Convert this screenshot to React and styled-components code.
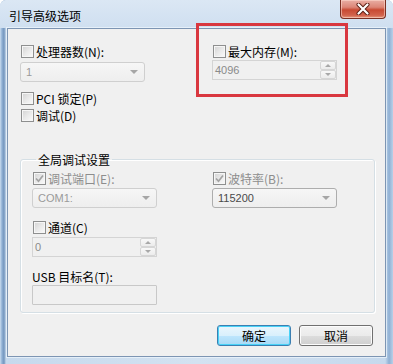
import React from "react";
import styled, { createGlobalStyle } from "styled-components";

const GlobalStyle = createGlobalStyle`
    html, body {
        margin: 0;
        padding: 0;
        background: #ffffff;
    }
    body {
        font-family: "Noto Sans CJK SC", "Noto Sans", sans-serif;
    }
`;

const Check = ({ checked }) => (
    <Box>
        {checked && (
            <svg width="11" height="11" viewBox="0 0 11 11">
                <path
                    d="M2 5.5 L4.5 8.2 L9 2.5"
                    fill="none"
                    stroke="#a3a3a3"
                    strokeWidth="1.7"
                />
            </svg>
        )}
    </Box>
);

const CheckField = ({ label, checked, dim, indent }) => (
    <CheckRow $dim={dim} $indent={indent}>
        <Check checked={checked} />
        <span>{label}</span>
    </CheckRow>
);

const Combo = ({ value, dim, top }) => (
    <ComboBox $dim={dim} $top={top}>
        <span>{value}</span>
        <Arrow />
    </ComboBox>
);

const Spin = ({ value, top }) => (
    <SpinBox $top={top}>
        <span>{value}</span>
        <SpinButtons>
            <SpinBtn>
                <Tri $up />
            </SpinBtn>
            <SpinBtn>
                <Tri />
            </SpinBtn>
        </SpinButtons>
    </SpinBox>
);

const App = () => {
    return (
        <>
            <GlobalStyle />
            <Window>
                <TitleBar>
                    <Title>引导高级选项</Title>
                    <CloseButton>
                        <svg width="14" height="12" viewBox="0 0 14 12">
                            <path
                                d="M2.5 1.5 L11.5 10.5 M11.5 1.5 L2.5 10.5"
                                stroke="#5a1d12"
                                strokeWidth="4"
                                strokeLinecap="round"
                            />
                            <path
                                d="M2.5 1.5 L11.5 10.5 M11.5 1.5 L2.5 10.5"
                                stroke="#ffffff"
                                strokeWidth="2.2"
                                strokeLinecap="round"
                            />
                        </svg>
                    </CloseButton>
                </TitleBar>
                <Client>
                    <Columns $first={192}>
                        <Column>
                            <CheckField label="处理器数(N):" indent={1} />
                            <Combo value="1" dim top={4} />
                            <Gap $h={10} />
                            <CheckField label="PCI 锁定(P)" indent={1} />
                            <Gap $h={4} />
                            <CheckField label="调试(D)" indent={1} />
                        </Column>
                        <Column>
                            <CheckField label="最大内存(M):" indent={1} />
                            <Spin value="4096" top={2} />
                        </Column>
                    </Columns>
                    <Group>
                        <Legend>全局调试设置</Legend>
                        <Columns $first={180}>
                            <Column>
                                <CheckField label="调试端口(E):" checked dim indent={1} />
                                <Combo value="COM1:" dim top={3} />
                                <Gap $h={13} />
                                <CheckField label="通道(C)" indent={1} />
                                <Spin value="0" top={3} />
                                <Gap $h={13} />
                                <FieldLabel>USB 目标名(T):</FieldLabel>
                                <TextBox />
                            </Column>
                            <Column>
                                <CheckField label="波特率(B):" checked dim indent={1} />
                                <Combo value="115200" top={3} />
                            </Column>
                        </Columns>
                    </Group>
                    <ButtonRow>
                        <Button $primary>确定</Button>
                        <Button>取消</Button>
                    </ButtonRow>
                </Client>
                <Highlight />
            </Window>
        </>
    );
};

export default App;

const Window = styled.div`
    position: relative;
    width: 393px;
    height: 364px;
    box-sizing: border-box;
    padding: 0 7px 7px 7px;
    display: flex;
    flex-direction: column;
    background: linear-gradient(
        to right,
        #cadcef 0px,
        #8fb0d4 2px,
        #7395bd 4px,
        #c6d9ed 6px,
        #d3e2f1 50%,
        #c6d9ed 98%,
        #8fb0d4 99%,
        #b9d0e8 100%
    );
    border-radius: 6px 6px 0 0;
`;

const TitleBar = styled.div`
    height: 28px;
    display: flex;
    align-items: flex-start;
    background: linear-gradient(to bottom, #dbe7f4, #cfdff0);
    margin: 0 -7px;
    padding: 0 7px;
    border-radius: 6px 6px 0 0;
`;

const Title = styled.div`
    margin-top: 8px;
    padding-left: 2px;
    font-size: 12px;
    line-height: 15px;
    color: #000000;
`;

const CloseButton = styled.div`
    margin-left: auto;
    width: 46px;
    height: 19px;
    box-sizing: border-box;
    display: flex;
    align-items: center;
    justify-content: center;
    border: 1px solid #7a2f23;
    border-top: none;
    border-radius: 0 0 4px 4px;
    background: linear-gradient(
        to bottom,
        #e9aea4 0%,
        #dc8677 40%,
        #c84a33 55%,
        #d2634c 85%,
        #e59a7f 100%
    );
    box-shadow: inset 0 0 0 1px rgba(255, 220, 210, 0.55);
`;

const Client = styled.div`
    flex: 1;
    background: #f0f0f0;
    border: 1px solid #7d95b3;
    box-shadow: 0 0 0 1px rgba(240, 246, 252, 0.7);
    padding: 16px 10px 10px 12px;
    display: flex;
    flex-direction: column;
`;

const Columns = styled.div`
    display: grid;
    grid-template-columns: ${(props) => props.$first}px 1fr;
`;

const Column = styled.div`
    display: flex;
    flex-direction: column;
    align-items: flex-start;
`;

const Gap = styled.div`
    height: ${(props) => props.$h}px;
`;

const CheckRow = styled.div`
    display: flex;
    align-items: center;
    gap: 2px;
    height: 13px;
    margin-left: ${(props) => props.$indent || 0}px;
    font-size: 12px;
    line-height: 13px;
    color: ${(props) => (props.$dim ? "#8d8d8d" : "#000000")};
    white-space: nowrap;
`;

const Box = styled.div`
    width: 13px;
    height: 13px;
    box-sizing: border-box;
    border: 1px solid #8e8f8f;
    background: linear-gradient(135deg, #d2d2d2 0%, #e9e9e9 50%, #fbfbfb 100%);
    box-shadow: inset 0 0 0 1px #f6f6f6;
    display: flex;
    align-items: center;
    justify-content: center;
    flex-shrink: 0;
`;

const ComboBox = styled.div`
    margin-top: ${(props) => props.$top || 0}px;
    width: 125px;
    height: 20px;
    box-sizing: border-box;
    border: 1px solid ${(props) => (props.$dim ? "#cfcfcf" : "#adadad")};
    border-radius: 3px;
    background: linear-gradient(to bottom, #f6f6f6, #eeeeee);
    display: flex;
    align-items: center;
    padding-left: 5px;
    font-family: "Liberation Sans", Arial, sans-serif;
    font-size: 11px;
    color: ${(props) => (props.$dim ? "#9a9a9a" : "#4a4a4a")};
`;

const Arrow = styled.div`
    margin-left: auto;
    margin-right: 6px;
    width: 0;
    height: 0;
    border-left: 4px solid transparent;
    border-right: 4px solid transparent;
    border-top: 4px solid #a6a6a6;
`;

const SpinBox = styled.div`
    margin-top: ${(props) => props.$top || 0}px;
    width: 125px;
    height: 20px;
    box-sizing: border-box;
    border: 1px solid #d4d4d4;
    background: #f0f0f0;
    display: flex;
    align-items: center;
    padding-left: 2px;
    font-family: "Liberation Sans", Arial, sans-serif;
    font-size: 11px;
    color: #8a8a8a;
`;

const SpinButtons = styled.div`
    margin-left: auto;
    width: 16px;
    height: 18px;
    display: flex;
    flex-direction: column;
`;

const SpinBtn = styled.div`
    flex: 1;
    box-sizing: border-box;
    border: 1px solid #d6d6d6;
    border-radius: 2px;
    background: linear-gradient(to bottom, #f8f8f8, #ececec);
    display: flex;
    align-items: center;
    justify-content: center;
`;

const Tri = styled.div`
    width: 0;
    height: 0;
    border-left: 3px solid transparent;
    border-right: 3px solid transparent;
    ${(props) =>
        props.$up
            ? "border-bottom: 3px solid #a8a8a8;"
            : "border-top: 3px solid #a8a8a8;"}
`;

const Group = styled.fieldset`
    margin: 31px 0 0 0;
    padding: 6px 0 7px 11px;
    min-width: 0;
    border: 1px solid #d5dfe5;
    border-radius: 3px;
    box-shadow: inset 1px 1px 0 #ffffff, 1px 1px 0 #ffffff;
`;

const Legend = styled.legend`
    margin-left: 4px;
    padding: 0 2px;
    font-size: 12px;
    line-height: 13px;
    color: #000000;
`;

const FieldLabel = styled.div`
    font-size: 12px;
    line-height: 13px;
    color: #000000;
`;

const TextBox = styled.div`
    margin-top: 2px;
    width: 125px;
    height: 20px;
    box-sizing: border-box;
    border: 1px solid #c8c8c8;
    border-radius: 1px;
    background: #f0f0f0;
`;

const ButtonRow = styled.div`
    display: flex;
    justify-content: flex-end;
    gap: 8px;
    margin: 12px 2px 0 0;
`;

const Button = styled.div`
    width: 74px;
    height: 21px;
    box-sizing: border-box;
    display: flex;
    align-items: center;
    justify-content: center;
    border-radius: 3px;
    font-size: 12px;
    color: #000000;
    border: 1px solid ${(props) => (props.$primary ? "#3c7fb1" : "#707070")};
    background: ${(props) =>
        props.$primary
            ? "linear-gradient(to bottom, #eaf6fd 0%, #d9f0fc 50%, #bee6fd 51%, #a7d9f5 100%)"
            : "linear-gradient(to bottom, #f2f2f2 0%, #ebebeb 50%, #dddddd 51%, #cfcfcf 100%)"};
    box-shadow: inset 0 0 0 1px
        ${(props) => (props.$primary ? "#48d2f7" : "#fcfcfc")};
`;

const Highlight = styled.div`
    position: absolute;
    left: 196px;
    top: 23px;
    width: 152px;
    height: 74px;
    box-sizing: border-box;
    border: 3px solid #d9373f;
    pointer-events: none;
`;
